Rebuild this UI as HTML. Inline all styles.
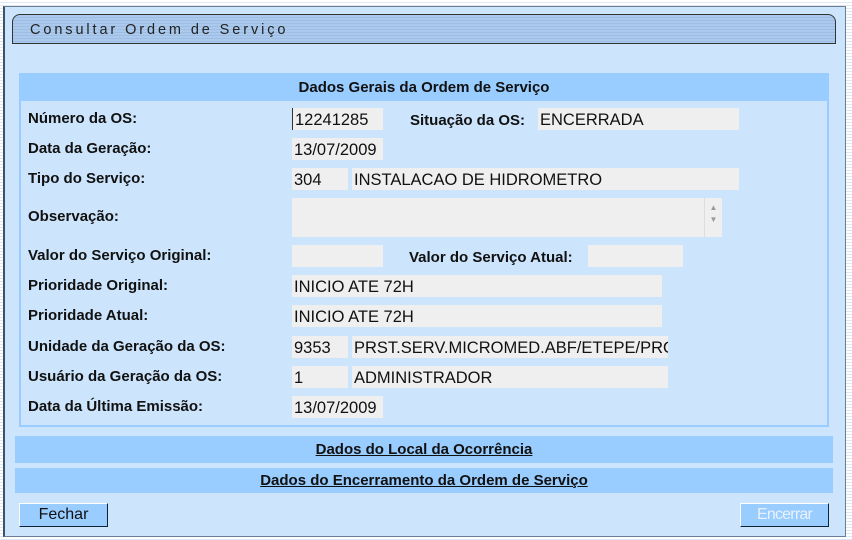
<!DOCTYPE html>
<html><head><meta charset="utf-8"><style>
*{margin:0;padding:0;box-sizing:border-box}
body{width:852px;height:540px;position:relative;overflow:hidden;font-family:"Liberation Sans",Arial,sans-serif;background:repeating-linear-gradient(#fff 0 2px,#dde8f4 2px 3px)}
.a{position:absolute}
#main{left:3px;top:6px;width:843px;height:531px;background:#cce5fc;border:1px solid #6a7f94;border-left:2px solid #3d5266}
#tab{left:12px;top:14px;width:824px;height:30px;border:1px solid #333;border-radius:8px 8px 0 0;background:repeating-linear-gradient(#aac9ec 0 2px,#9dbde2 2px 3px);}
#tab span{position:absolute;left:17px;top:7px;font-size:14.5px;letter-spacing:2.9px;color:#222}
#sec{left:19px;top:73px;width:810px;height:354px;border:2px solid #99ccff;border-top:none}
#hdr{left:19px;top:73px;width:810px;height:28px;background:#99ccff;text-align:center;font-weight:bold;font-size:15px;line-height:30px;color:#111}
.l{position:absolute;left:28px;font-weight:bold;font-size:15px;color:#111}
.f{position:absolute;background:#efefef;font-size:16.5px;color:#111;padding-left:2px;line-height:24px;height:22px;white-space:nowrap;overflow:hidden}
.bar{position:absolute;left:15px;width:818px;background:#99ccff;text-align:center;font-weight:bold;font-size:15px;text-decoration:underline;color:#111}
.btn{position:absolute;top:503px;width:89px;height:24px;background:#99ccff;border:1px solid;border-color:#fff #123 #123 #fff;text-align:center;font-size:16px;line-height:22px}
</style></head><body>
<div class="a" id="main"></div>
<div class="a" id="tab"><span>Consultar Ordem de Serviço</span></div>
<div class="a" id="sec"></div>
<div class="a" id="hdr">Dados Gerais da Ordem de Serviço</div>

<div class="l" style="top:110px">Número da OS:</div>
<div class="f" style="left:292px;top:108px;width:91px;border-left:1px solid #333">12241285</div>
<div class="l" style="left:410px;top:112px">Situação da OS:</div>
<div class="f" style="left:538px;top:108px;width:201px">ENCERRADA</div>

<div class="l" style="top:140px">Data da Geração:</div>
<div class="f" style="left:292px;top:138px;width:91px">13/07/2009</div>

<div class="l" style="top:170px">Tipo do Serviço:</div>
<div class="f" style="left:292px;top:168px;width:56px">304</div>
<div class="f" style="left:352px;top:168px;width:387px">INSTALACAO DE HIDROMETRO</div>

<div class="l" style="top:208px">Observação:</div>
<div class="f" style="left:292px;top:198px;width:412px;height:39px"></div>
<div class="f" style="left:704px;top:198px;width:18px;height:39px;border-left:1px solid #ddd;font-size:8px;color:#999;line-height:12px;text-align:center;padding:4px 0 0">▲<br>▼</div>

<div class="l" style="top:247px">Valor do Serviço Original:</div>
<div class="f" style="left:292px;top:245px;width:91px"></div>
<div class="l" style="left:409px;top:249px">Valor do Serviço Atual:</div>
<div class="f" style="left:588px;top:245px;width:95px"></div>

<div class="l" style="top:277px">Prioridade Original:</div>
<div class="f" style="left:292px;top:275px;width:370px">INICIO ATE 72H</div>
<div class="l" style="top:307px">Prioridade Atual:</div>
<div class="f" style="left:292px;top:305px;width:370px">INICIO ATE 72H</div>

<div class="l" style="top:338px">Unidade da Geração da OS:</div>
<div class="f" style="left:292px;top:336px;width:56px">9353</div>
<div class="f" style="left:352px;top:336px;width:316px">PRST.SERV.MICROMED.ABF/ETEPE/PROC</div>

<div class="l" style="top:368px">Usuário da Geração da OS:</div>
<div class="f" style="left:292px;top:366px;width:56px">1</div>
<div class="f" style="left:352px;top:366px;width:316px">ADMINISTRADOR</div>

<div class="l" style="top:398px">Data da Última Emissão:</div>
<div class="f" style="left:292px;top:396px;width:91px">13/07/2009</div>

<div class="bar" style="top:436px;height:27px;line-height:28px">Dados do Local da Ocorrência</div>
<div class="bar" style="top:468px;height:25px;line-height:26px">Dados do Encerramento da Ordem de Serviço</div>

<div class="btn" style="left:19px;color:#111">Fechar</div>
<div class="btn" style="left:740px;color:#e8f2fc;letter-spacing:-0.8px">Encerrar</div>
</body></html>
